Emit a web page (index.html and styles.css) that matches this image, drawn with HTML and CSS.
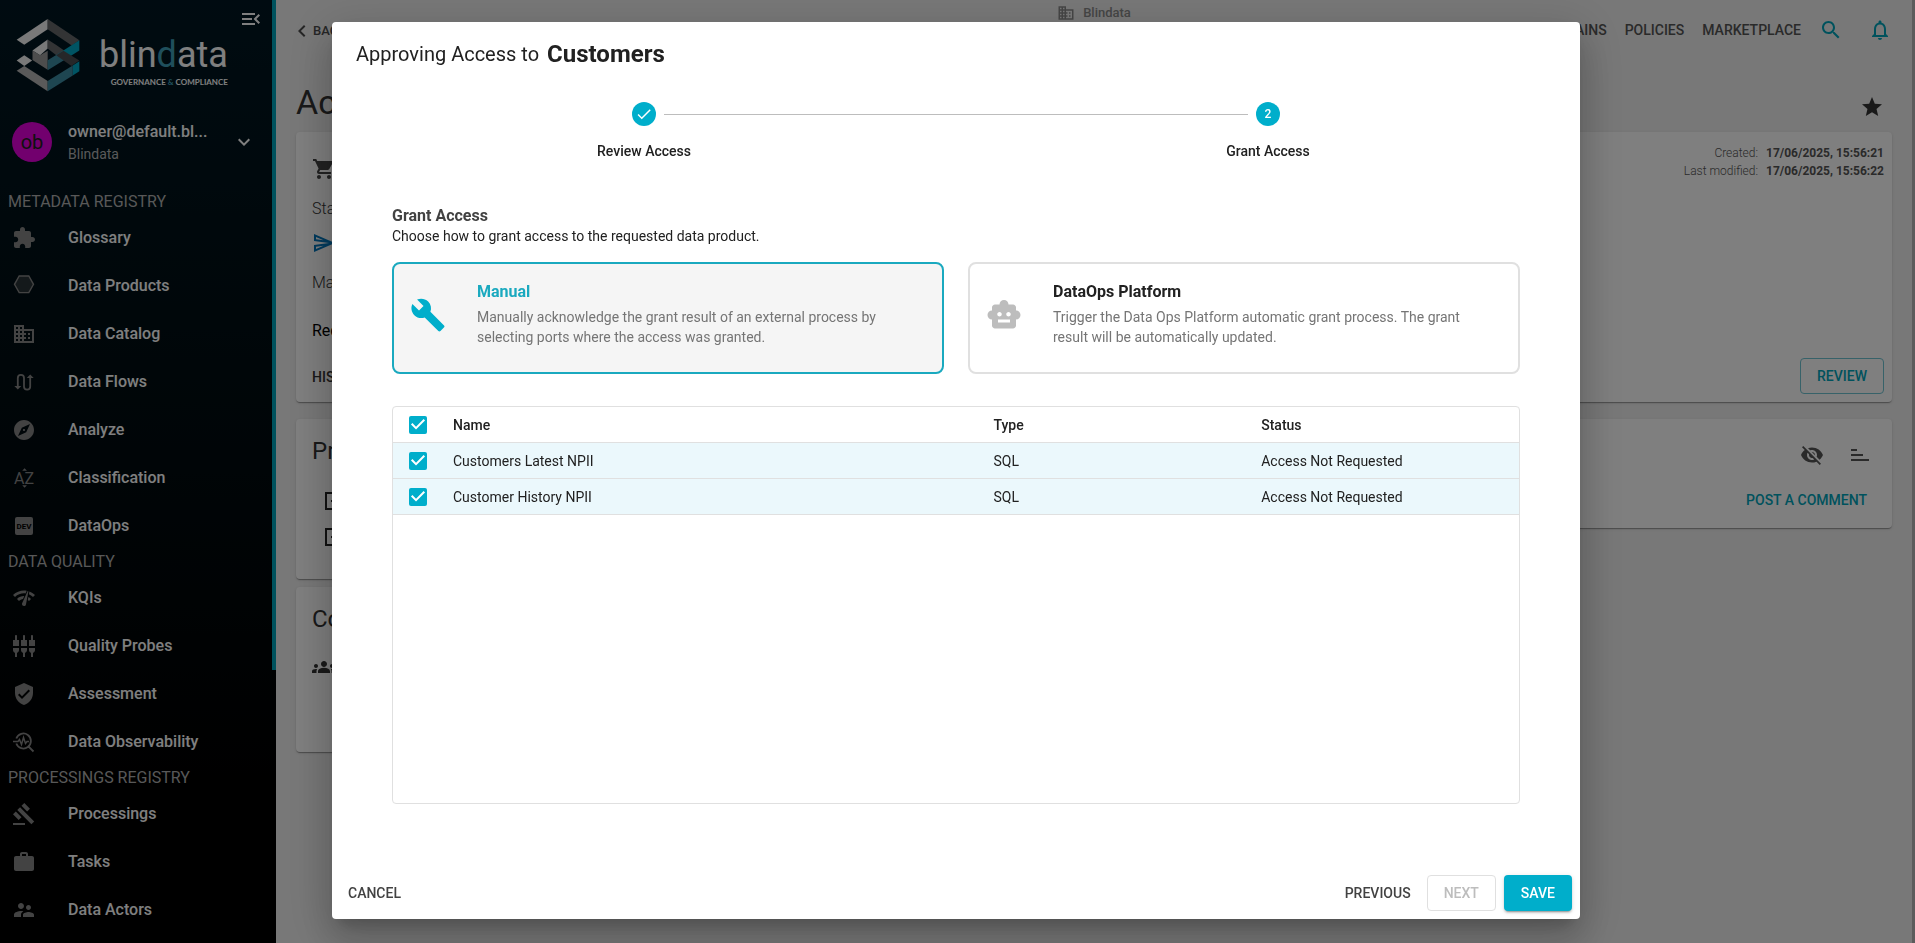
FILE: index.html
```html
<!DOCTYPE html>
<html lang="en">
<head>
    <meta charset="UTF-8">
    <meta name="viewport" content="width=device-width, initial-scale=1.0">
    <title>Blindata - Access Request</title>
    <link rel="stylesheet" href="styles.css">
</head>
<body>
    <div class="app">
        <!-- Sidebar -->
        <aside class="sidebar">
            <div class="sidebar-content">
                <div class="sidebar-header">
                    <a href="#" class="logo">
                        <svg class="logo-mark" viewBox="46 52 194 222">
                            <path fill="#f2f2f2" d="M48 117 142 54v31L71 132z"/>
                            <path fill="#66696b" d="M142 54l96 64-23 16-73-49z"/>
                            <path fill="#f2f2f2" d="M96 149l46-33v27l-23 21z"/>
                            <path fill="#66696b" d="M142 116l26 17 24 16-22 16-28-22z"/>
                            <path fill="#9b9b9b" d="M96 149l23 15 23-14v58l-46-30z"/>
                            <path fill="#00a8c6" d="M238 118v31l-48 31-23-16z"/>
                            <path fill="#3c8ca3" d="M190 149l-48 30v30l48-29z"/>
                            <path fill="#f2f2f2" d="M48 180l23-16 24 16-24 16z"/>
                            <path fill="#4c4f52" d="M190 150l48 30-24 16-46-32z"/>
                            <path fill="#b5b5b5" d="M48 211l23-15 71 46v31z"/>
                            <path fill="#00a8c6" d="M238 182v30l-20 13V195z"/>
                            <path fill="#3c8ca3" d="M218 195v30l-76 48v-31z"/>
                        </svg>
                        <span class="logo-text">
                            <span class="logo-name">blin<em>d</em>ata</span>
                            <span class="logo-claim">GOVERNANCE <em>&amp;</em> COMPLIANCE</span>
                        </span>
                    </a>
                    <button class="icon-button" aria-label="Collapse menu">
                        <svg class="icon" viewBox="0 0 24 24"><path d="M3 18h13v-2H3v2zm0-5h10v-2H3v2zm0-7v2h13V6H3zm18 9.59L17.42 12 21 8.41 19.59 7l-5 5 5 5L21 15.59z"/></svg>
                    </button>
                </div>

                <button class="user">
                    <span class="avatar">ob</span>
                    <span class="user-text">
                        <span class="user-name">owner@default.bl...</span>
                        <span class="user-org">Blindata</span>
                    </span>
                    <svg class="icon" viewBox="0 0 24 24"><path d="M16.59 8.59 12 13.17 7.41 8.59 6 10l6 6 6-6z"/></svg>
                </button>

                <nav class="menu">
                    <h2>METADATA REGISTRY</h2>
                    <a href="#"><svg class="icon" viewBox="0 0 24 24"><path d="M20.5 11H19V7c0-1.1-.9-2-2-2h-4V3.5C13 2.12 11.88 1 10.5 1S8 2.12 8 3.5V5H4c-1.1 0-1.99.9-1.99 2v3.8H3.5c1.49 0 2.7 1.21 2.7 2.7s-1.21 2.7-2.7 2.7H2V20c0 1.1.9 2 2 2h3.8v-1.5c0-1.49 1.21-2.7 2.7-2.7 1.49 0 2.7 1.21 2.7 2.7V22H17c1.1 0 2-.9 2-2v-4h1.5c1.38 0 2.5-1.12 2.5-2.5S21.88 11 20.5 11z"/></svg>Glossary</a>
                    <a href="#"><svg class="icon" viewBox="0 0 24 24"><path fill-opacity=".3" stroke="currentColor" stroke-width="1.4" d="M7.2 2h9.6l4.7 8.3-4.7 8.3H7.2l-4.7-8.3z"/></svg>Data Products</a>
                    <a href="#"><svg class="icon" viewBox="0 0 24 24"><path d="M12 7V3H2v18h20V7H12zM6 19H4v-2h2v2zm0-4H4v-2h2v2zm0-4H4V9h2v2zm0-4H4V5h2v2zm4 12H8v-2h2v2zm0-4H8v-2h2v2zm0-4H8V9h2v2zm0-4H8V5h2v2zm10 12h-8v-2h2v-2h-2v-2h2v-2h-2V9h8v10zm-2-8h-2v2h2v-2zm0 4h-2v2h2v-2z"/></svg>Data Catalog</a>
                    <a href="#"><svg class="icon" viewBox="0 0 24 24"><path fill="none" stroke="currentColor" stroke-width="1.8" d="M5.8 17V8a3.1 3.1 0 0 1 6.2 0v8.500a3.100 3.100 0 0 0 6.200 0V7"/><path d="M2.300 16h7l-3.500 3.600zM14.700 8h7l-3.500-3.600z"/></svg>Data Flows</a>
                    <a href="#"><svg class="icon" viewBox="0 0 24 24"><path d="M12 10.900c-.61 0-1.100.49-1.100 1.100s.49 1.100 1.100 1.100c.61 0 1.100-.49 1.100-1.100s-.49-1.100-1.100-1.100zM12 2C6.480 2 2 6.480 2 12s4.480 10 10 10 10-4.480 10-10S17.520 2 12 2zm2.190 12.190L6 18l3.810-8.190L18 6l-3.810 8.190z"/></svg>Analyze</a>
                    <a href="#"><svg class="icon" viewBox="0 0 24 24"><path d="M14.940 4.660h-4.720l2.360-2.360zm-4.690 14.710h4.660l-2.330 2.330z"/><text class="az" x="12" y="18" text-anchor="middle">AZ</text></svg>Classification</a>
                    <a href="#"><svg class="icon" viewBox="0 0 24 24"><rect x="3" y="3" width="18" height="18" rx="2"/><text class="dev" x="12" y="15" text-anchor="middle">DEV</text></svg>DataOps</a>

                    <h2>DATA QUALITY</h2>
                    <a href="#"><svg class="icon" viewBox="0 0 24 24"><path d="M15.900 5c-.17 0-.32.090-.41.230l-.070.150-5.180 11.650c-.16.290-.26.610-.26.960 0 1.110.9 2.010 2.010 2.010.96 0 1.770-.68 1.960-1.590l.010-.030L16.400 5.500c0-.28-.22-.5-.5-.5zM1 9l2 2c2.880-2.880 6.790-4.080 10.530-3.620l1.190-2.680C9.890 3.840 4.740 5.270 1 9zm20 2 2-2c-1.640-1.640-3.550-2.820-5.590-3.570l-.53 2.820c1.500.620 2.900 1.530 4.120 2.750zm-4 4 2-2c-.8-.8-1.700-1.420-2.660-1.890l-.55 2.920c.42.270.83.590 1.210.97zM5 13l2 2c1.130-1.130 2.560-1.790 4.030-2l1.280-2.880c-2.630-.08-5.300.87-7.310 2.880z"/></svg>KQIs</a>
                    <a href="#"><svg class="icon" viewBox="0 0 24 24"><path d="M5 2c0-.55-.45-1-1-1s-1 .45-1 1v4H1v6h6V6H5V2zm4 14c0 1.300.84 2.400 2 2.820V23h2v-4.180c1.160-.41 2-1.510 2-2.820v-2H9v2zm-8 0c0 1.300.84 2.400 2 2.820V23h2v-4.180C6.160 18.400 7 17.300 7 16v-2H1v2zM21 6V2c0-.55-.45-1-1-1s-1 .45-1 1v4h-2v6h6V6h-2zm-8-4c0-.55-.45-1-1-1s-1 .45-1 1v4H9v6h6V6h-2V2zm4 14c0 1.300.84 2.400 2 2.820V23h2v-4.180c1.160-.41 2-1.510 2-2.820v-2h-6v2z"/></svg>Quality Probes</a>
                    <a href="#"><svg class="icon" viewBox="0 0 24 24"><path d="M12 1 3 5v6c0 5.550 3.840 10.740 9 12 5.160-1.260 9-6.450 9-12V5l-9-4zm-2 16-4-4 1.410-1.410L10 14.170l6.590-6.590L18 9l-8 8z"/></svg>Assessment</a>
                    <a href="#"><svg class="icon" viewBox="0 0 24 24"><g fill="none" stroke="currentColor"><path stroke-width="1.800" d="M4.300 8.500a7.500 7.500 0 1 1 0 5M16.500 16.500l5 5"/><path stroke-width="1.500" d="M1 11.500h5l1.500-2 2 5 2-7 2 6 1.500-2H17"/></g></svg>Data Observability</a>

                    <h2>PROCESSINGS REGISTRY</h2>
                    <a href="#"><svg class="icon" viewBox="0 0 24 24"><path d="M1 21h12v2H1zM5.245 8.070l2.830-2.827 14.140 14.142-2.828 2.828zM12.317 1l5.657 5.656-2.830 2.830-5.654-5.660zM3.825 9.485l5.657 5.657-2.828 2.828-5.657-5.657z"/></svg>Processings</a>
                    <a href="#"><svg class="icon" viewBox="0 0 24 24"><path d="M20 6h-4V4c0-1.110-.89-2-2-2h-4c-1.110 0-2 .89-2 2v2H4c-1.110 0-1.990.89-1.990 2L2 19c0 1.110.89 2 2 2h16c1.110 0 2-.89 2-2V8c0-1.110-.89-2-2-2zm-6 0h-4V4h4v2z"/></svg>Tasks</a>
                    <a href="#"><svg class="icon" viewBox="0 0 24 24"><path d="M16.500 12c1.380 0 2.490-1.120 2.490-2.500S17.880 7 16.500 7C15.120 7 14 8.120 14 9.500s1.120 2.500 2.500 2.500zM9 11c1.660 0 2.990-1.340 2.990-3S10.660 5 9 5C7.340 5 6 6.340 6 8s1.340 3 3 3zm7.500 3c-1.830 0-5.500.92-5.500 2.750V19h11v-2.250c0-1.830-3.670-2.750-5.500-2.750zM9 13c-2.330 0-7 1.170-7 3.500V19h7v-2.250c0-.85.33-2.340 2.370-3.470C10.500 13.100 9.660 13 9 13z"/></svg>Data Actors</a>
                </nav>
            </div>
            <div class="sidebar-scroll"></div>
        </aside>

        <!-- Page behind the dialog -->
        <main class="page">
            <header class="topbar">
                <a href="#" class="back">
                    <svg class="icon" viewBox="6 0 16 24"><path d="M15.410 7.410 14 6l-6 6 6 6 1.410-1.410L10.830 12z"/></svg>BACK
                </a>
                <span class="tenant">
                    <svg class="icon" viewBox="0 0 24 24"><path d="M12 7V3H2v18h20V7H12zM6 19H4v-2h2v2zm0-4H4v-2h2v2zm0-4H4V9h2v2zm0-4H4V5h2v2zm4 12H8v-2h2v2zm0-4H8v-2h2v2zm0-4H8V9h2v2zm0-4H8V5h2v2zm10 12h-8v-2h2v-2h-2v-2h2v-2h-2V9h8v10zm-2-8h-2v2h2v-2zm0 4h-2v2h2v-2z"/></svg>Blindata
                </span>
                <nav class="topnav">
                    <a href="#">DOMAINS</a>
                    <a href="#">POLICIES</a>
                    <a href="#">MARKETPLACE</a>
                    <button class="icon-button" aria-label="Search">
                        <svg class="icon" viewBox="0 0 24 24"><path d="M15.500 14h-.79l-.28-.27C15.410 12.590 16 11.110 16 9.500 16 5.910 13.090 3 9.500 3S3 5.910 3 9.500 5.910 16 9.500 16c1.610 0 3.090-.59 4.230-1.570l.27.280v.79l5 4.990L20.490 19l-4.990-5zm-6 0C7.010 14 5 11.990 5 9.500S7.010 5 9.500 5 14 7.010 14 9.500 11.990 14 9.500 14z"/></svg>
                    </button>
                    <button class="icon-button" aria-label="Notifications">
                        <svg class="icon" viewBox="0 0 24 24"><path d="M12 22c1.100 0 2-.9 2-2h-4c0 1.100.9 2 2 2zm6-6v-5c0-3.070-1.630-5.640-4.500-6.320V4c0-.83-.67-1.500-1.500-1.500s-1.500.67-1.500 1.500v.68C7.640 5.360 6 7.920 6 11v5l-2 2v1h16v-1l-2-2zm-2 1H8v-6c0-2.480 1.510-4.500 4-4.500s4 2.020 4 4.500v6z"/></svg>
                    </button>
                </nav>
            </header>

            <div class="page-title">
                <h1>Access Request</h1>
                <button class="icon-button" aria-label="Favorite">
                    <svg class="icon" viewBox="0 0 24 24"><path d="M12 17.270 18.180 21l-1.640-7.030L22 9.240l-7.190-.61L12 2 9.190 8.630 2 9.240l5.460 4.730L5.820 21z"/></svg>
                </button>
            </div>

            <section class="card request">
                <div class="request-info">
                    <svg class="icon" viewBox="0 0 24 24"><path d="M7 18c-1.100 0-1.990.9-1.990 2S5.900 22 7 22s2-.9 2-2-.9-2-2-2zM1 2v2h2l3.600 7.590-1.350 2.450c-.16.280-.25.610-.25.960 0 1.100.9 2 2 2h12v-2H7.420c-.14 0-.25-.11-.25-.25l.030-.12.9-1.630h7.450c.75 0 1.410-.41 1.750-1.030l3.580-6.490c.08-.14.12-.31.12-.48 0-.55-.45-1-1-1H5.210l-.94-2H1zm16 16c-1.100 0-1.990.9-1.990 2s.89 2 1.990 2 2-.9 2-2-.9-2-2-2z"/></svg>
                    <span class="light">Status</span>
                    <svg class="icon send" viewBox="0 0 24 24"><path d="m4.010 6.030 7.510 3.220-7.520-1 .010-2.220m7.500 8.720L4 17.970v-2.220l7.510-1M2.010 3 2 10l15 2-15 2 .010 7L23 12 2.010 3z"/></svg>
                    <span class="light">Manager</span>
                    <span class="requester">Requester</span>
                    <a href="#" class="history">HISTORY</a>
                </div>
                <div class="request-side">
                    <dl class="dates">
                        <dt>Created:</dt><dd>17/06/2025, 15:56:21</dd>
                        <dt>Last modified:</dt><dd>17/06/2025, 15:56:22</dd>
                    </dl>
                    <button class="button outlined">REVIEW</button>
                </div>
            </section>

            <div class="columns">
                <div class="column">
                    <section class="card products">
                        <h3>Products</h3>
                        <svg class="icon" viewBox="0 0 24 24"><path fill="none" stroke="currentColor" stroke-width="2" d="M20 8V4H4v16h16v-4M9 12h12"/></svg>
                        <svg class="icon" viewBox="0 0 24 24"><path fill="none" stroke="currentColor" stroke-width="2" d="M20 8V4H4v16h16v-4M9 12h12"/></svg>
                    </section>
                    <section class="card contacts">
                        <h3>Contacts</h3>
                        <svg class="icon" viewBox="0 0 24 24"><path d="M12 12.750c1.630 0 3.070.39 4.240.9 1.080.48 1.760 1.560 1.760 2.730V18H6v-1.610c0-1.180.68-2.260 1.760-2.730 1.170-.52 2.610-.91 4.240-.91zM4 13c1.100 0 2-.9 2-2s-.9-2-2-2-2 .9-2 2 .9 2 2 2zm1.130 1.100c-.37-.06-.74-.1-1.130-.1-.99 0-1.930.21-2.780.58C.48 14.900 0 15.620 0 16.430V18h4.500v-1.610c0-.83.23-1.610.63-2.290zM20 13c1.100 0 2-.9 2-2s-.9-2-2-2-2 .9-2 2 .9 2 2 2zm4 3.430c0-.81-.48-1.530-1.220-1.850-.85-.37-1.790-.58-2.780-.58-.39 0-.76.040-1.130.1.400.68.63 1.460.63 2.290V18H24v-1.570zM12 6c1.660 0 3 1.340 3 3s-1.340 3-3 3-3-1.340-3-3 1.340-3 3-3z"/></svg>
                    </section>
                </div>
                <section class="card comments">
                    <div class="comment-tools">
                        <button class="icon-button" aria-label="Hide system comments">
                            <svg class="icon" viewBox="0 0 24 24"><path d="M12 7c2.760 0 5 2.240 5 5 0 .65-.13 1.260-.36 1.830l2.920 2.920c1.510-1.260 2.700-2.890 3.430-4.750-1.730-4.390-6-7.500-11-7.500-1.400 0-2.740.25-3.980.7l2.160 2.160C10.740 7.130 11.350 7 12 7zM2 4.270l2.280 2.280.46.46C3.080 8.300 1.780 10.020 1 12c1.730 4.390 6 7.500 11 7.500 1.550 0 3.030-.3 4.380-.84l.42.42L19.730 22 21 20.730 3.270 3 2 4.270zM7.530 9.800l1.550 1.550c-.05.21-.08.43-.08.65 0 1.660 1.340 3 3 3 .22 0 .44-.03.65-.08l1.550 1.550c-.67.33-1.410.53-2.200.53-2.760 0-5-2.240-5-5 0-.79.2-1.530.53-2.200zm4.310-.78 3.150 3.150.020-.16c0-1.660-1.340-3-3-3l-.17.010z"/></svg>
                        </button>
                        <button class="icon-button" aria-label="Sort comments">
                            <svg class="icon" viewBox="0 0 24 24"><path d="M3 6h6v2H3zM3 11h12v2H3zM3 16h18v2H3z"/></svg>
                        </button>
                    </div>
                    <button class="button text primary">POST A COMMENT</button>
                </section>
            </div>
        </main>
        <div class="page-scroll"></div>
    </div>

    <!-- Approval dialog -->
    <div class="backdrop">
        <form class="dialog" role="dialog" aria-labelledby="dialogTitle">
            <h2 class="dialog-title" id="dialogTitle">Approving Access to <strong>Customers</strong></h2>

            <ol class="stepper">
                <li>
                    <span class="step-icon"><svg class="icon" viewBox="0 0 24 24"><path d="M9 16.200 4.800 12l-1.400 1.400L9 19 21 7l-1.400-1.400z"/></svg></span>
                    Review Access
                </li>
                <li>
                    <span class="step-icon">2</span>
                    Grant Access
                </li>
            </ol>

            <div class="dialog-content">
                <h3>Grant Access</h3>
                <p>Choose how to grant access to the requested data product.</p>

                <div class="options">
                    <label class="option">
                        <input type="radio" name="mode" value="manual" checked>
                        <svg class="icon" viewBox="0 0 24 24"><path d="M22.700 19l-9.100-9.100c.9-2.300.4-5-1.500-6.900-2-2-5-2.400-7.400-1.300L9 6 6 9 1.600 4.700C.4 7.100.9 10.100 2.900 12.100c1.900 1.900 4.600 2.400 6.900 1.500l9.100 9.100c.4.4 1 .4 1.400 0l2.300-2.300c.5-.4.5-1.100.1-1.400z"/></svg>
                        <span class="option-text">
                            <strong>Manual</strong>
                            <span>Manually acknowledge the grant result of an external process by selecting ports where the access was granted.</span>
                        </span>
                    </label>
                    <label class="option">
                        <input type="radio" name="mode" value="dataops">
                        <svg class="icon" viewBox="0 0 24 24"><path d="M20 9V7c0-1.100-.9-2-2-2h-3c0-1.660-1.340-3-3-3S9 3.340 9 5H6c-1.100 0-2 .9-2 2v2c-1.660 0-3 1.340-3 3s1.340 3 3 3v4c0 1.100.9 2 2 2h12c1.100 0 2-.9 2-2v-4c1.660 0 3-1.340 3-3s-1.340-3-3-3zM7.500 11.500c0-.83.67-1.500 1.500-1.500s1.500.67 1.500 1.500S9.830 13 9 13s-1.500-.67-1.500-1.500zM16 17H8v-2h8v2zm-1-4c-.83 0-1.500-.67-1.500-1.500S14.170 10 15 10s1.500.67 1.500 1.500S15.830 13 15 13z"/></svg>
                        <span class="option-text">
                            <strong>DataOps Platform</strong>
                            <span>Trigger the Data Ops Platform automatic grant process. The grant result will be automatically updated.</span>
                        </span>
                    </label>
                </div>

                <div class="ports">
                    <table>
                        <thead>
                            <tr>
                                <th class="check"><input type="checkbox" aria-label="Select all" checked></th>
                                <th class="name">Name</th>
                                <th>Type</th>
                                <th>Status</th>
                            </tr>
                        </thead>
                        <tbody>
                            <tr>
                                <td class="check"><input type="checkbox" id="port1" checked></td>
                                <td><label for="port1">Customers Latest NPII</label></td>
                                <td>SQL</td>
                                <td>Access Not Requested</td>
                            </tr>
                            <tr>
                                <td class="check"><input type="checkbox" id="port2" checked></td>
                                <td><label for="port2">Customer History NPII</label></td>
                                <td>SQL</td>
                                <td>Access Not Requested</td>
                            </tr>
                        </tbody>
                    </table>
                </div>
            </div>

            <div class="dialog-actions">
                <button type="button" class="button text cancel">CANCEL</button>
                <button type="button" class="button text">PREVIOUS</button>
                <button type="button" class="button outlined" disabled>NEXT</button>
                <button type="submit" class="button contained">SAVE</button>
            </div>
        </form>
    </div>
</body>
</html>
```

FILE: styles.css
```css
* {
    box-sizing: border-box;
}
body {
    margin: 0;
    font-family: Roboto, "Liberation Sans", sans-serif;
    font-size: 14px;
    line-height: 20px;
    color: #212121;
    background-color: #f0f0f0;
}
h1, h2, h3, p, ol, dl, dd {
    margin: 0;
    padding: 0;
    font-weight: 400;
}
a {
    color: inherit;
    text-decoration: none;
}
button {
    font: inherit;
    color: inherit;
    background: none;
    border: none;
    padding: 0;
    cursor: pointer;
}
.icon {
    width: 24px;
    height: 24px;
    fill: currentColor;
    flex-shrink: 0;
    display: block;
}
.app {
    display: flex;
    height: 100vh;
    overflow: hidden;
}

/* Sidebar */
.sidebar {
    width: 276px;
    flex-shrink: 0;
    display: flex;
    color: #fff;
    background: linear-gradient(#001722, #000a0e 50%, #000 85%);
}
.sidebar-content {
    flex: 1;
    min-width: 0;
    overflow: hidden;
}
.sidebar-scroll {
    width: 4px;
    height: 71%;
    background-color: #00a4ba;
}
.sidebar-header {
    display: flex;
    justify-content: space-between;
    align-items: flex-start;
    height: 118px;
    padding: 7px 9px 0 16px;
}
.logo {
    display: flex;
    gap: 19px;
    padding-top: 11px;
}
.logo-mark {
    width: 64px;
    height: 74px;
}
.logo em {
    font-style: normal;
    color: #3f9fb8;
}
.logo-text {
    display: flex;
    flex-direction: column;
    align-items: flex-end;
    gap: 2px;
    padding-top: 17px;
}
.logo-name {
    font-size: 36px;
    line-height: 40px;
}
.logo-claim {
    font-family: Lato, sans-serif;
    font-size: 8px;
    line-height: 10px;
    font-weight: 700;
    white-space: nowrap;
}
.user {
    display: flex;
    align-items: center;
    gap: 16px;
    width: 100%;
    height: 48px;
    padding: 0 16px 0 12px;
    text-align: left;
}
.avatar {
    width: 40px;
    height: 40px;
    border-radius: 50%;
    background-color: #e400dc;
    color: #212121;
    font-size: 20px;
    line-height: 40px;
    text-align: center;
}
.user-text {
    flex: 1;
    display: flex;
    flex-direction: column;
}
.user-name {
    font-size: 16px;
    line-height: 24px;
    font-weight: 500;
}
.user-org {
    color: #b4b4b4;
}
.menu {
    padding-top: 24px;
    font-size: 16px;
}
.menu h2 {
    padding-left: 8px;
    font-size: 16px;
    line-height: 24px;
    color: #b0b0b0;
}
.menu a {
    display: flex;
    align-items: center;
    gap: 32px;
    height: 48px;
    padding-left: 12px;
    font-weight: 500;
}
.menu .icon {
    color: #868686;
}
.az {
    font-size: 16px;
    font-weight: 400;
}
.dev {
    font-size: 8px;
    font-weight: 700;
    fill: #000;
}

/* Page */
.page {
    flex: 1;
    padding: 0 20px;
    color: #333;
}
.page-scroll {
    width: 3px;
    background-color: #b8b8b8;
}
.topbar {
    display: grid;
    grid-template-columns: 1fr auto 1fr;
    align-items: center;
    height: 60px;
}
.back {
    display: flex;
    align-items: center;
    gap: 1px;
    padding-top: 2px;
    font-size: 13px;
    font-weight: 500;
    color: #4c4c4c;
}
.back .icon {
    width: 16px;
}
.tenant {
    align-self: start;
    display: flex;
    align-items: center;
    gap: 8px;
    padding-top: 3px;
    font-size: 13px;
    font-weight: 500;
    color: #8c8c8c;
}
.tenant .icon {
    width: 18px;
    height: 18px;
}
.topnav {
    display: flex;
    justify-content: flex-end;
    align-items: center;
    gap: 18px;
    font-weight: 500;
    color: #555;
}
.topnav .icon-button {
    color: #00a4ba;
}
.topnav .icon-button + .icon-button {
    margin-left: 7px;
}
.page-title {
    display: flex;
    justify-content: space-between;
    align-items: center;
    height: 72px;
    padding: 22px 8px 0 0;
}
.page-title h1 {
    padding-bottom: 10px;
    font-size: 34px;
    line-height: 40px;
}
.card {
    background-color: #fff;
    border-radius: 4px;
    box-shadow: 0 2px 1px -1px rgba(0, 0, 0, 0.2), 0 1px 1px rgba(0, 0, 0, 0.14), 0 1px 3px rgba(0, 0, 0, 0.12);
}
.request {
    display: flex;
    justify-content: space-between;
    min-height: 270px;
}
.request-info {
    display: flex;
    flex-direction: column;
    align-items: flex-start;
    padding: 25px 16px 12px;
    font-size: 16px;
}
.request-info .icon {
    color: #444;
}
.request-info .send {
    margin: 10px 0;
    color: #0277bd;
}
.request-info .light {
    line-height: 24px;
    font-weight: 300;
}
.request-info .icon + .light {
    margin-top: 16px;
}
.request-info .send + .light {
    margin-top: 6px;
}
.request-info .requester {
    margin-top: 26px;
    color: #000;
}
.request-info .history {
    margin-top: 26px;
    font-size: 14px;
    font-weight: 500;
}
.request-side {
    display: flex;
    flex-direction: column;
    justify-content: space-between;
    align-items: flex-end;
    padding: 12px 8px 8px;
}
.dates {
    display: grid;
    grid-template-columns: auto auto;
    column-gap: 8px;
    font-size: 12px;
    line-height: 18px;
    text-align: right;
    color: #555;
}
.dates dt {
    font-weight: 300;
}
.dates dd {
    font-weight: 700;
}
.columns {
    display: grid;
    grid-template-columns: 1fr 1fr;
    align-items: start;
    gap: 24px;
    margin-top: 17px;
}
.column {
    display: flex;
    flex-direction: column;
    gap: 8px;
}
.card h3 {
    font-size: 24px;
    line-height: 32px;
}
.products {
    min-height: 160px;
    padding: 16px;
}
.products .icon {
    margin: 12px 0 0 10px;
    color: #222;
}
.products h3 + .icon {
    margin-top: 22px;
}
.contacts {
    min-height: 165px;
    padding: 16px;
}
.contacts .icon {
    margin-top: 20px;
}
.comments {
    display: flex;
    flex-direction: column;
    align-items: flex-end;
    gap: 15px;
    padding: 24px 17px 10px;
}
.comment-tools {
    display: flex;
    gap: 24px;
    padding-right: 3px;
    color: #555;
}

/* Buttons */
.button {
    height: 36px;
    padding: 0 8px;
    border-radius: 4px;
    font-weight: 500;
    color: #424242;
}
.primary {
    color: #00a4ba;
}
.outlined {
    padding: 0 16px;
    border: 1px solid #6fc4d2;
    color: #00a4ba;
}
.outlined:disabled {
    border-color: #e0e0e0;
    color: #bdbdbd;
    cursor: default;
}
.contained {
    padding: 0 17px;
    background-color: #00aecb;
    color: #fff;
    box-shadow: 0 3px 1px -2px rgba(0, 0, 0, 0.2), 0 2px 2px rgba(0, 0, 0, 0.14), 0 1px 5px rgba(0, 0, 0, 0.12);
}

/* Dialog */
.backdrop {
    position: fixed;
    inset: 0;
    display: flex;
    justify-content: center;
    padding: 22px 35px 24px 32px;
    background-color: rgba(0, 0, 0, 0.5);
}
.dialog {
    display: flex;
    flex-direction: column;
    width: 100%;
    max-width: 1248px;
    border-radius: 4px;
    background-color: #fff;
    box-shadow: 0 11px 15px -7px rgba(0, 0, 0, 0.2), 0 24px 38px 3px rgba(0, 0, 0, 0.14), 0 9px 46px 8px rgba(0, 0, 0, 0.12);
}
.dialog-title {
    display: flex;
    align-items: center;
    gap: 8px;
    padding: 16px 24px;
    font-size: 20px;
    line-height: 32px;
}
.dialog-title strong {
    font-size: 24px;
    font-weight: 700;
}
.stepper {
    display: flex;
    padding-top: 16px;
    list-style: none;
}
.stepper li {
    flex: 1;
    position: relative;
    display: flex;
    flex-direction: column;
    align-items: center;
    gap: 15px;
    font-weight: 500;
}
/* connector between the two circles */
.stepper li + li::before {
    content: "";
    position: absolute;
    top: 12px;
    left: calc(-50% + 20px);
    right: calc(50% + 20px);
    border-top: 1px solid #bdbdbd;
}
.step-icon {
    display: flex;
    align-items: center;
    justify-content: center;
    width: 24px;
    height: 24px;
    border-radius: 50%;
    background-color: #00aecb;
    color: #fff;
    font-size: 12px;
}
.step-icon .icon {
    width: 18px;
    height: 18px;
}
.dialog-content {
    flex: 1;
    display: flex;
    flex-direction: column;
    padding: 45px 60px 63px;
}
.dialog-content h3 {
    font-size: 16px;
    font-weight: 700;
    color: #424242;
}
.options {
    display: grid;
    grid-template-columns: 1fr 1fr;
    gap: 24px;
    margin: 16px 0 32px;
}
.option {
    display: flex;
    align-items: center;
    gap: 31px;
    min-height: 112px;
    padding: 18px 40px 25px 16px;
    border: 2px solid #e0e0e0;
    border-radius: 8px;
    cursor: pointer;
}
.option input {
    position: absolute;
    opacity: 0;
}
.option .icon {
    width: 36px;
    height: 36px;
    color: #bdbdbd;
}
.option-text {
    align-self: flex-start;
    color: #757575;
}
.option strong {
    display: block;
    margin-bottom: 5px;
    font-size: 16px;
    color: #212121;
}
.option:has(:checked) {
    border-color: #1aa9bf;
    background-color: #f5f5f5;
}
.option:has(:checked) .icon {
    color: #00aecb;
}
.option:has(:checked) strong {
    color: #1aa9bf;
}
.ports {
    flex: 1;
    border: 1px solid #e0e0e0;
    border-radius: 4px;
}
table {
    width: 100%;
    table-layout: fixed;
    border-spacing: 0;
}
th, td {
    height: 36px;
    padding: 0 10px;
    border-bottom: 1px solid #e0e0e0;
    text-align: left;
}
th {
    font-weight: 500;
}
td {
    background-color: #ebf8fc;
}
.check {
    width: 50px;
    padding: 0 16px;
}
.name {
    width: 48%;
}
input[type=checkbox] {
    appearance: none;
    display: block;
    width: 18px;
    height: 18px;
    margin: 0;
    border-radius: 2px;
    background-color: #00aecb;
}
input[type=checkbox]:checked::before {
    content: "";
    display: block;
    height: 100%;
    background-color: #fff;
    clip-path: polygon(39% 78%, 11% 50%, 19% 42%, 39% 62%, 81% 20%, 89% 28%);
}
.dialog-actions {
    display: flex;
    gap: 8px;
    padding: 8px;
}
.cancel {
    margin-right: auto;
}
```
